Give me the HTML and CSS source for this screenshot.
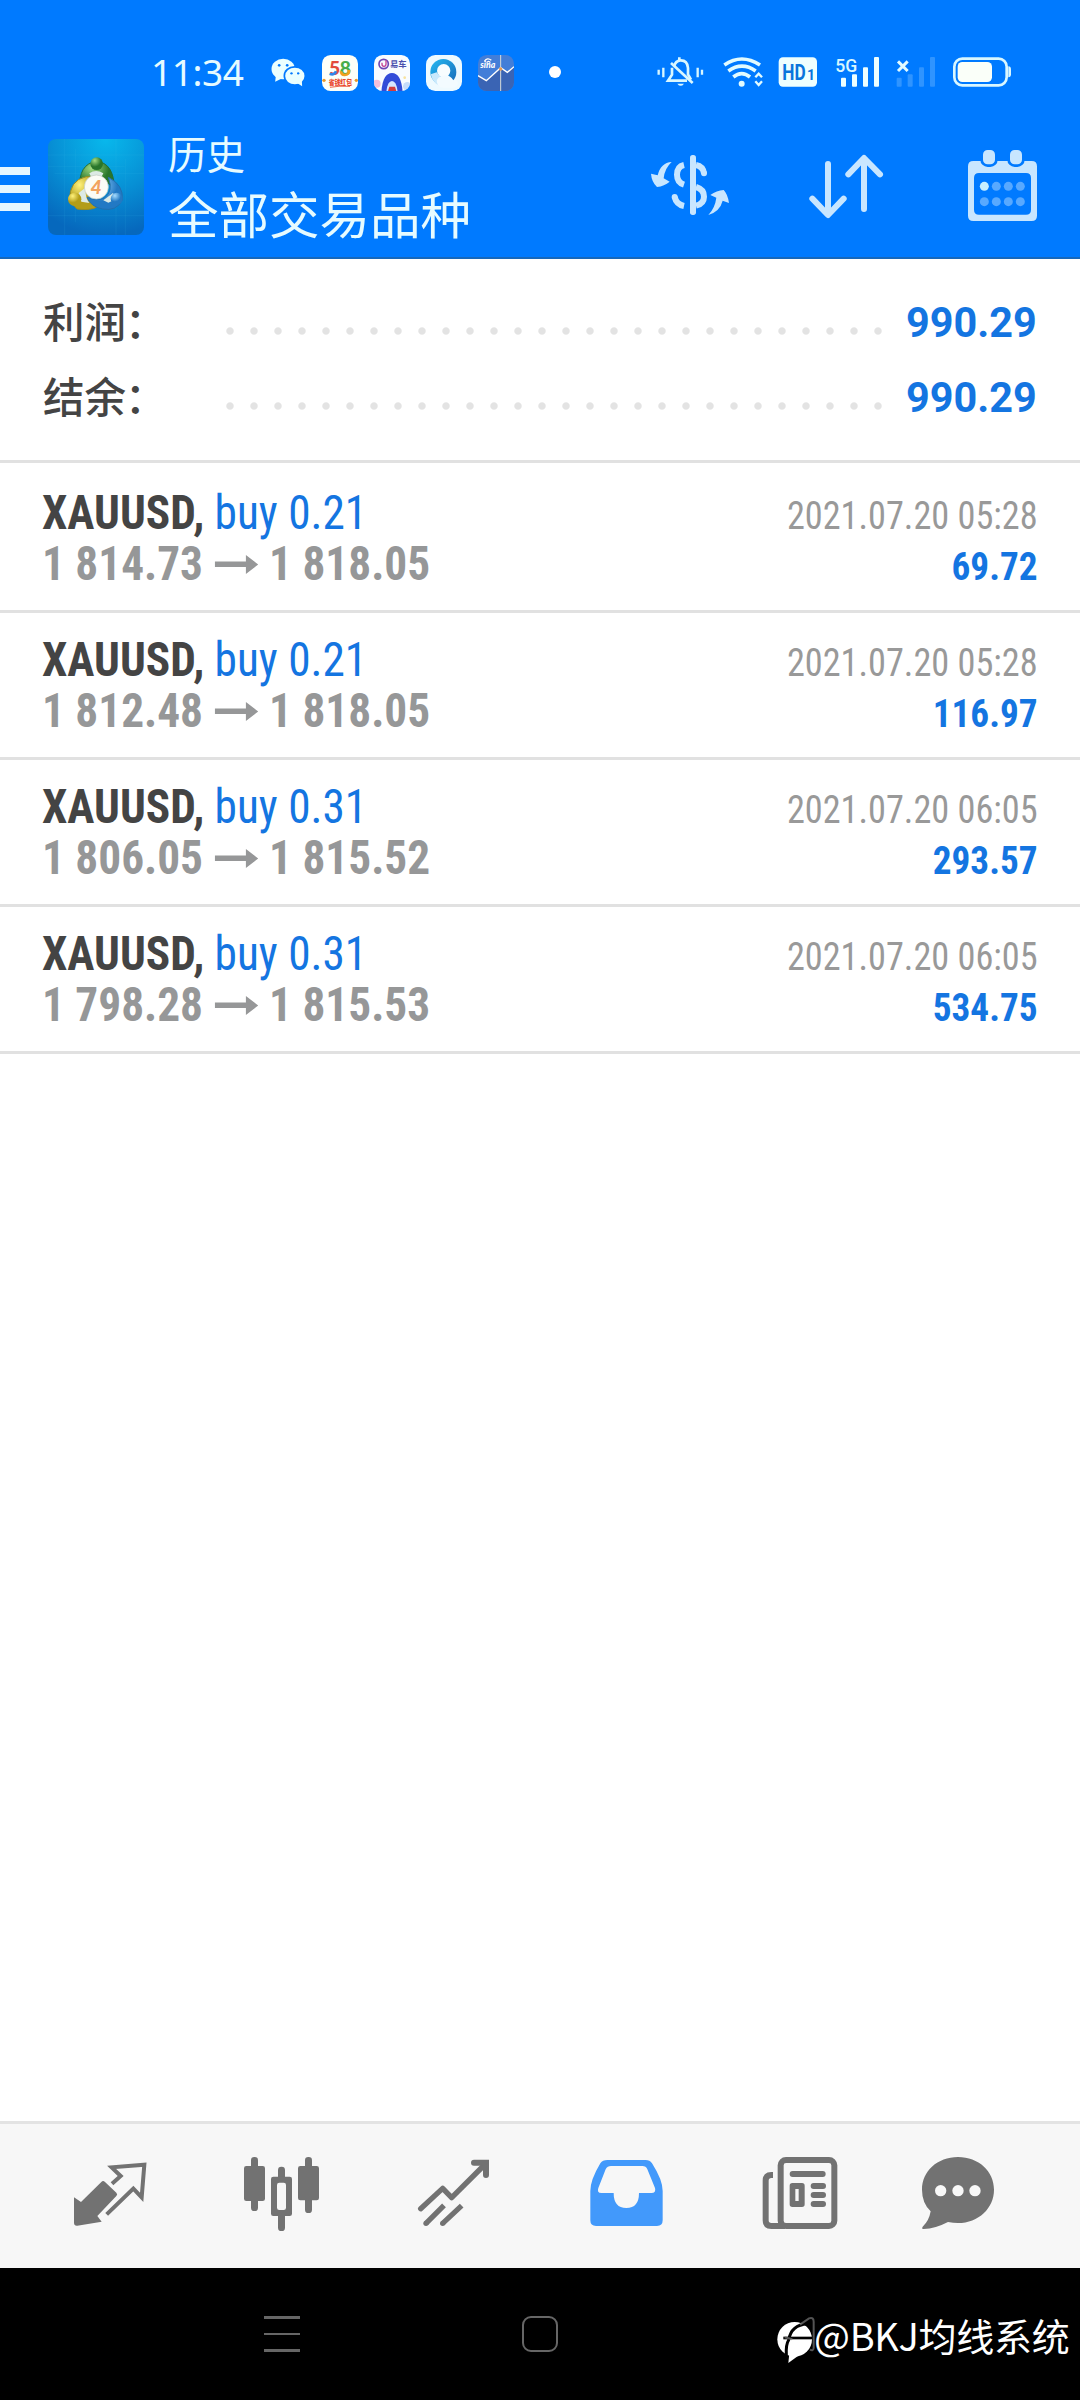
FILE: index.html
```html
<!DOCTYPE html>
<html lang="zh-CN">
<head>
<meta charset="utf-8">
<title>历史</title>
<link rel="stylesheet" href="styles.css">
</head>
<body>
<div class="status">
  <span class="time">11:34</span>
  <svg class="wechat" viewBox="390 0 110 210" width="37" height="70"><g fill="#eaffff"><ellipse cx="429" cy="87" rx="35" ry="31"/><path d="M407 108l-2 17 18-9z"/></g><ellipse cx="463" cy="107" rx="33" ry="29" fill="#0079ff"/><g fill="#eaffff"><ellipse cx="464" cy="108" rx="29" ry="25"/><path d="M472 130l14 9-1-17z"/></g><g fill="#0079ff"><circle cx="417" cy="76" r="4"/><circle cx="441" cy="76" r="4"/><circle cx="454" cy="100" r="3.5"/><circle cx="474" cy="100" r="3.5"/></g></svg>
  <svg class="app" viewBox="0 0 108 108"><rect width="108" height="108" rx="26" fill="#fdfff8"/><g font-family="Lato" font-weight="900" font-size="58"><text x="21" y="61" fill="#e24b3b">5</text><text x="53" y="61" fill="#48ad4b">8</text></g><path d="M23 56q14 6 19-7" fill="none" stroke="#3185e8" stroke-width="8"/><path d="M81 45q1 15-13 15-11 0-11-11" fill="none" stroke="#f2a11f" stroke-width="8"/><text x="20" y="91" font-family="Noto Sans CJK SC" font-weight="900" font-size="21" fill="#e9482b" textLength="70" lengthAdjust="spacingAndGlyphs">省钱红包</text><circle cx="6" cy="76" r="5" fill="#e89a2d"/><circle cx="103" cy="76" r="5" fill="#e89a2d"/><path d="M24 97q25-5 60-3" stroke="#e9482b" stroke-width="2.500" fill="none"/></svg>
  <svg class="app" viewBox="0 0 108 108"><defs><clipPath id="c1"><rect width="108" height="108" rx="26"/></clipPath></defs><g clip-path="url(#c1)"><rect width="108" height="108" fill="#f8fcff"/><circle cx="29" cy="27" r="14" fill="none" stroke="#6f48b5" stroke-width="5"/><path d="M24 23v5q0 6 6 6t6-7V16" fill="none" stroke="#c44293" stroke-width="4"/><text x="48" y="37" font-family="Noto Sans CJK SC" font-weight="700" font-size="25" fill="#4a50ae">易车</text><circle cx="8" cy="86" r="12" fill="#f4bfda"/><circle cx="100" cy="94" r="13" fill="#c6dcfa"/><circle cx="92" cy="68" r="4" fill="#f7e3a0"/><path d="M22 112q4-58 32-58t32 58" fill="#324cd8"/><path d="M37 112q3-34 17-34t17 34" fill="#d7e5ff"/><path d="M46 95h17l4 13H42z" fill="#d43d3d"/></g></svg>
  <svg class="app" viewBox="0 0 108 108"><defs><linearGradient id="q1" x1="0" y1="0" x2="1" y2="1"><stop offset="0" stop-color="#25b9f2"/><stop offset="1" stop-color="#1768b7"/></linearGradient></defs><rect width="108" height="108" rx="28" fill="#eefaff"/><circle cx="52" cy="51" r="39" fill="url(#q1)"/><circle cx="53" cy="47" r="20" fill="#f8fdff"/><path d="M14 58q8 34 38 38l-8-30-12-14z" fill="#c9e9fc"/><path d="M36 91q-11-19 10-28 23-8 36 13 16-5 13 10-3 12-16 12H51q-11 0-15-7z" fill="#f3fbff"/></svg>
  <svg class="app" viewBox="0 0 108 108"><defs><clipPath id="c2"><rect width="108" height="108" rx="26"/></clipPath></defs><g clip-path="url(#c2)"><rect width="108" height="108" fill="#437ed8"/><path d="M0 62l25 15 43-39 20 14 20-17v73H0z" fill="#3a64b4"/><path d="M0 62l25 15 43-39 20 14 20-17" fill="none" stroke="#fff" stroke-width="4"/><path d="M68 0v108" stroke="#d8dbda" stroke-width="3"/><circle cx="68" cy="42" r="5" fill="#e79a52"/><text x="7" y="40" font-family="Lato" font-weight="900" font-style="italic" font-size="26" fill="#fff">sina</text><path d="M19 19q9-13 21-3m-14 7q6-8 11 0" fill="none" stroke="#fff" stroke-width="4"/></g></svg>
  <span class="dot"></span>
  <svg class="system" viewBox="0 0 1200 210" width="400" height="70">
    <g fill="none" stroke="#d9f7ff" stroke-width="8"><path d="M56 89v15M70 83v29M173 83v29M186 89v15" stroke-width="7"/><path d="M103 78q3-15 18-17 21-1 23 23v19l9 16M96 83v21l-12 18h57M118 59v-7"/><path d="M93 69l65 60"/></g><path d="M112 131h20q-10 13-20 0z" fill="#d9f7ff"/>
    <g fill="none" stroke="#e1fbff" stroke-width="11"><path d="M253 75q52-36 107 0M265 93q41-29 82 0M280 111q25-20 50 0"/></g><circle cx="305" cy="131" r="9" fill="#e1fbff"/><path d="M346 112l10-11 10 11M346 124l10 11 10-11" fill="none" stroke="#e1fbff" stroke-width="7"/>
    <rect x="416" y="52" width="115" height="88" rx="13" fill="#edffff"/><text x="427" y="119" font-family="Roboto" font-weight="700" font-size="66" textLength="70" lengthAdjust="spacingAndGlyphs" fill="#0875dc">HD</text><text x="501" y="119" font-family="Roboto" font-weight="700" font-size="42" fill="#0875dc">1</text>
    <text x="586" y="95" font-family="Roboto" font-weight="500" font-size="57" textLength="66" lengthAdjust="spacingAndGlyphs" fill="#d9f7ff">5G</text>
    <g fill="#edffff"><rect x="603" y="113" width="15" height="27" rx="3"/><rect x="636" y="103" width="15" height="37" rx="3"/><rect x="669" y="82" width="15" height="58" rx="3"/><rect x="702" y="51" width="15" height="89" rx="3"/></g>
    <path d="M774 64l29 29m0-29l-29 29" stroke="#e1fbff" stroke-width="9"/><g fill="#2f94ff"><rect x="770" y="113" width="15" height="27" rx="3"/><rect x="803" y="103" width="15" height="37" rx="3"/><rect x="837" y="82" width="15" height="58" rx="3"/><rect x="870" y="51" width="15" height="89" rx="3"/></g>
    <rect x="943" y="56" width="157" height="80" rx="24" fill="none" stroke="#d9f7ff" stroke-width="8"/><rect x="953" y="66" width="103" height="60" rx="14" fill="#fafff9"/><path d="M1105 79q8 0 8 9v15q0 9-8 9z" fill="#d9f7ff"/>
  </svg>
</div>

<header class="header">
  <div class="menu"><i></i><i></i><i></i></div>
  <svg class="logo" viewBox="0 0 288 288"><defs><radialGradient id="bg" cx=".6" cy="0" r="1"><stop offset="0" stop-color="#08b8ec"/><stop offset=".55" stop-color="#0790d5"/><stop offset="1" stop-color="#0668bd"/></radialGradient><radialGradient id="gr" cx=".35" cy=".25"><stop offset="0" stop-color="#a4dc83"/><stop offset="1" stop-color="#29762b"/></radialGradient><radialGradient id="ye" cx=".35" cy=".25"><stop offset="0" stop-color="#fff27c"/><stop offset="1" stop-color="#b39d18"/></radialGradient><radialGradient id="bl" cx=".35" cy=".25"><stop offset="0" stop-color="#a6dcff"/><stop offset="1" stop-color="#2279c4"/></radialGradient></defs>
    <rect width="288" height="288" rx="24" fill="url(#bg)"/><path d="M0 48h288M0 82h230M20 104h268M0 230h288M50 0v288M82 30v220M204 0v288M232 60v228" stroke="#4fc5ef" stroke-opacity=".16" stroke-width="2"/>
    <path d="M95 150q-4-75 50-83 53 4 54 83l-28-26-27-20-22 20z" fill="url(#gr)" stroke="#216f38" stroke-width="3"/>
    <path d="M65 185q-2-62 50-72h20l-21 22q-4 45 36 67-20 14-63 8z" fill="url(#ye)" stroke="#9a8c22" stroke-width="3"/>
    <path d="M181 115q46 22 42 68-17 35-60 27-35-7-46-35 30 14 52 2 28-19 12-62z" fill="url(#bl)" stroke="#216fae" stroke-width="3"/>
    <path d="M124 103q20-14 42 0l-6 12h-30zM92 162l20-16q-1 30 12 46l-24-4zM166 184l29-22 10 18-24 11z" fill="#dceae4"/>
    <circle cx="146" cy="74" r="19" fill="url(#gr)"/><circle cx="80" cy="181" r="20" fill="url(#ye)"/><circle cx="206" cy="179" r="18" fill="url(#bl)"/>
    <circle cx="145" cy="144" r="36" fill="#fbfcf6" stroke="#bfc9c2" stroke-width="2"/><text x="144" y="164" text-anchor="middle" font-family="Lato" font-style="italic" font-weight="900" font-size="58" fill="#f2a35f">4</text></svg>
  <div class="titles"><div class="sub">历史</div><div class="main">全部交易品种</div></div>
  <div class="actions">
    <svg viewBox="60 0 300 360"><g fill="#c8e6ff"><rect x="210" y="75" width="18" height="180" rx="8"/><path d="M155 96Q122 98 113 136L93 131Q95 156 111 171 133 168 149 155L131 145Q134 115 155 96ZM265 255Q300 244 308 212L327 219Q323 192 311 180 290 181 271 195L289 203Q285 234 265 255Z"/></g><g fill="none" stroke="#c8e6ff" stroke-width="18"><path d="M192 105Q171 110 171 134 171 157 192 164M164 201Q169 223 192 228M228 105Q249 109 252 130M228 171Q252 178 252 200 252 221 228 227"/></g><circle cx="164" cy="201" r="9" fill="#c8e6ff"/><circle cx="252" cy="130" r="9" fill="#c8e6ff"/></svg>
    <svg viewBox="540 0 300 360"><path d="M624 102v152M577 206l47 49 47-49M732 237V85M685 133l47-49 48 49" fill="none" stroke="#c8e6ff" stroke-width="18" stroke-linecap="round" stroke-linejoin="round"/></svg>
    <svg viewBox="1020 0 300 360"><path fill="#c8e6ff" fill-rule="evenodd" d="M1060 93H1235Q1251 93 1251 109V257Q1251 273 1235 273H1060Q1044 273 1044 257V109Q1044 93 1060 93ZM1077 129Q1062 129 1062 144V239Q1062 254 1077 254H1218Q1233 254 1233 239V144Q1233 129 1218 129Z"/><g fill="#c8e6ff" stroke="#007aff" stroke-width="8"><rect x="1085" y="56" width="44" height="51" rx="18"/><rect x="1166" y="56" width="44" height="51" rx="18"/></g><g fill="#58a9ff"><circle cx="1129" cy="169" r="13.500"/><circle cx="1165" cy="169" r="13.500"/><circle cx="1201" cy="169" r="13.500"/><circle cx="1093" cy="215" r="13.500"/><circle cx="1129" cy="215" r="13.500"/><circle cx="1165" cy="215" r="13.500"/><circle cx="1201" cy="215" r="13.500"/></g><circle cx="1093" cy="169" r="13.500" fill="#c8efff"/></svg>
  </div>
</header>

<section class="summary">
  <div class="total"><span class="label">利润<em>：</em></span><span class="leader"></span><b>990.29</b></div>
  <div class="total"><span class="label">结余<em>：</em></span><span class="leader"></span><b>990.29</b></div>
</section>

<main class="deals">
  <div class="deal"><div class="left"><div class="symbol"><b>XAUUSD,</b> buy 0.21</div><div class="price">1 814.73<svg viewBox="0 0 46 20"><path d="M0 7.500H33V1L46 10.500 33 20V13H0z"/></svg>1 818.05</div></div><div class="right"><div class="date">2021.07.20 05:28</div><div class="profit">69.72</div></div></div>
  <div class="deal"><div class="left"><div class="symbol"><b>XAUUSD,</b> buy 0.21</div><div class="price">1 812.48<svg viewBox="0 0 46 20"><path d="M0 7.500H33V1L46 10.500 33 20V13H0z"/></svg>1 818.05</div></div><div class="right"><div class="date">2021.07.20 05:28</div><div class="profit">116.97</div></div></div>
  <div class="deal"><div class="left"><div class="symbol"><b>XAUUSD,</b> buy 0.31</div><div class="price">1 806.05<svg viewBox="0 0 46 20"><path d="M0 7.500H33V1L46 10.500 33 20V13H0z"/></svg>1 815.52</div></div><div class="right"><div class="date">2021.07.20 06:05</div><div class="profit">293.57</div></div></div>
  <div class="deal"><div class="left"><div class="symbol"><b>XAUUSD,</b> buy 0.31</div><div class="price">1 798.28<svg viewBox="0 0 46 20"><path d="M0 7.500H33V1L46 10.500 33 20V13H0z"/></svg>1 815.53</div></div><div class="right"><div class="date">2021.07.20 06:05</div><div class="profit">534.75</div></div></div>
</main>

<nav class="tabs">
  <svg viewBox="60 42 300 432"><path d="M102 262l21 14 61-60q5-6 11 0l34 32q5 5 0 10l-57 60 13 17-73 12q-10 1-10-9z" fill="#727272"/><path d="M216 221l26-23-27-26 98-8-8 98-25-26-80 77" fill="none" stroke="#727272" stroke-width="12"/></svg>
  <svg viewBox="576 42 300 432"><g fill="#727272"><rect x="633" y="141" width="21" height="162" rx="10"/><rect x="612" y="168" width="63" height="105" rx="7"/><rect x="795" y="141" width="21" height="168" rx="10"/><rect x="774" y="168" width="63" height="103" rx="7"/><rect x="714" y="170" width="21" height="193" rx="10"/><rect x="693" y="200" width="63" height="118" rx="7"/></g><rect x="711" y="218" width="27" height="82" rx="7" fill="#f7f7f7"/></svg>
  <svg viewBox="1092 42 300 432"><g fill="none" stroke="#727272" stroke-width="16"><path d="M1142 296l66-61 27 28 101-101" stroke-linecap="round" stroke-linejoin="round"/><path d="M1302 158h36v37" stroke-width="18" stroke-linecap="round"/><path d="M1158 340l54-54M1208 340l57-53"/></g><g fill="#727272"><circle cx="1158" cy="340" r="8"/><circle cx="1208" cy="340" r="8"/></g></svg>
  <svg viewBox="108 42 300 432"><path fill="#4299fb" fill-rule="evenodd" d="M202 150H317Q329 150 336 160 368 210 368 243V331Q368 348 351 348H168Q151 348 151 331V243Q151 210 181 160 188 150 202 150ZM213 168Q202 168 197 178L175 234Q170 249 184 249H221Q221 294 259 294 297 294 297 249H334Q349 249 345 234L322 178Q318 168 307 168Z"/></svg>
  <svg viewBox="624 42 300 432"><g fill="none" stroke="#727272" stroke-width="18"><rect x="722" y="150" width="161" height="198" rx="16"/><path d="M699 195H694Q677 195 677 212V331Q677 348 694 348H735"/><path d="M758 192h90M821 228h28M821 255h28M821 282h28" stroke-linecap="round"/></g><path fill="#727272" fill-rule="evenodd" d="M757 219h29q8 0 8 8v56q0 8-8 8h-29q-8 0-8-8v-56q0-8 8-8zm9 18v36h10v-36z"/></svg>
  <svg viewBox="1104 42 300 432"><path fill="#727272" d="M1254 141C1316 141 1362 184 1362 239S1316 339 1254 339Q1240 339 1224 336 1186 356 1151 357 1144 357 1148 350 1167 333 1172 304 1146 279 1146 239C1146 184 1192 141 1254 141Z"/><g fill="#f8f8f8"><circle cx="1202" cy="242" r="17"/><circle cx="1254" cy="242" r="17"/><circle cx="1305" cy="242" r="17"/></g></svg>
</nav>

<footer class="sysnav">
  <div class="recents"><i></i><i></i><i></i></div>
  <div class="home"></div>
  <div class="mark">
    <svg viewBox="45 0 120 240" width="40" height="80"><circle cx="104" cy="118" r="52" fill="#fff"/><path d="M88 160l-3 29 32-23z" fill="#fff"/><path d="M142 72Q94 74 86 120 77 134 79 166" fill="none" stroke="#000" stroke-width="9"/><path d="M70 114h90" stroke="#000" stroke-width="8"/><path d="M74 112L97 118M120 74L147 55Q161 50 161 65V144Q160 154 150 149" fill="none" stroke="#777" stroke-opacity=".7" stroke-width="6"/></svg><span>@BKJ均线系统</span>
  </div>
</footer>
</body>
</html>
```
FILE: styles.css
```css
* { box-sizing: border-box; }
body {
  margin: 0;
  width: 1080px;
  height: 2400px;
  display: flex;
  flex-direction: column;
  overflow: hidden;
  background: #fff;
  font-family: Roboto, "Noto Sans CJK SC", sans-serif;
}
svg { display: block; flex: none; }

.status {
  height: 120px;
  padding: 40px 0 10px 151px;
  display: flex;
  background: #007aff;
  color: #e6fbff;
}
.time { width: 119px; font: 400 37px/64px "Noto Sans", sans-serif; letter-spacing: -.4px; white-space: nowrap; }
.wechat { margin-right: 15px; }
.app { width: 36px; height: 36px; margin: 14.5px 16px 0 0; }
.dot { width: 12px; height: 12px; border-radius: 50%; background: #fff; margin: 26px 79px 0 19px; }

.header {
  height: 139px;
  display: flex;
  background: #007aff;
  border-bottom: 2px solid #1668bc;
  color: #e6fbff;
}
.menu { width: 30px; margin: 47px 18px 0 0; display: flex; flex-direction: column; gap: 10px; }
.menu i { height: 8px; background: #e6f6ff; }
.logo { width: 96px; height: 96px; margin-top: 19px; }
.titles { margin: 2px 0 0 24px; width: 320px; font-family: "Noto Sans CJK SC", sans-serif; white-space: nowrap; }
.sub { font-size: 38.5px; line-height: 60px; }
.main { font-size: 50.5px; line-height: 60px; }
.actions { margin: 10px 20px 0 auto; display: flex; gap: 60px; }
.actions svg { width: 100px; height: 120px; }

.summary { height: 204px; padding: 26px 43px 0; border-bottom: 3px solid #e1e1e1; }
.total { height: 75px; display: flex; }
.label { width: 183px; font: 500 41.5px/71px "Noto Sans CJK SC", sans-serif; color: #444; white-space: nowrap; }
.label em { font-style: normal; margin-left: -1px; }
.leader {
  width: 672px;
  height: 24px;
  margin-top: 34px;
  margin-left: -8px;
  background: radial-gradient(circle at center, #e3e3e3 3.2px, transparent 4.2px) 0 0 / 24px 24px;
}
.total b { margin-left: auto; font-size: 42px; line-height: 75px; color: #1475e1; transform: scaleX(.985); transform-origin: right; }

.deal {
  height: 147px;
  padding: 21px 42px 0;
  border-bottom: 3px solid #e1e1e1;
  display: flex;
  justify-content: space-between;
  font-size: 48px;
  line-height: 51px;
  font-stretch: 75%;
  white-space: nowrap;
}
.deal:first-child { height: 150px; padding-top: 24px; }
.left { transform: scaleX(.944); transform-origin: left; }
.symbol { color: #1475e1; }
.symbol b { color: #444; }
.price { display: flex; align-items: center; font-weight: 700; color: #969798; }
.price svg { width: 46px; height: 20px; margin: 0 12px; fill: #969798; }
.right { text-align: right; }
.date { font-size: 39px; line-height: 59px; height: 51px; color: #999; transform: scaleX(.93); transform-origin: right; }
.profit { font-size: 39px; line-height: 59px; height: 51px; font-weight: 700; color: #1475e1; transform: scaleX(.955); transform-origin: right; }

.tabs {
  margin-top: auto;
  height: 147px;
  padding-left: 60px;
  border-top: 3px solid #e3e3e3;
  background: #f7f7f7;
  display: flex;
  gap: 72px;
}
.tabs svg { width: 100px; height: 144px; }
.tabs svg:last-child { margin-left: -12px; }

.sysnav { height: 132px; padding-left: 264px; display: flex; background: #000; }
.recents { width: 36px; margin-top: 48px; display: flex; flex-direction: column; gap: 14px; }
.recents i { height: 2.7px; background: #666; }
.home { width: 36px; height: 36px; margin: 48px 217px 0 222px; border: 2.5px solid #666; border-radius: 9px; }
.mark { display: flex; margin-top: 32px; color: #fff; }
.mark span { margin-left: -1px; font: 400 38px/70px "Noto Sans CJK SC", sans-serif; letter-spacing: -.3px; white-space: nowrap; }
```
